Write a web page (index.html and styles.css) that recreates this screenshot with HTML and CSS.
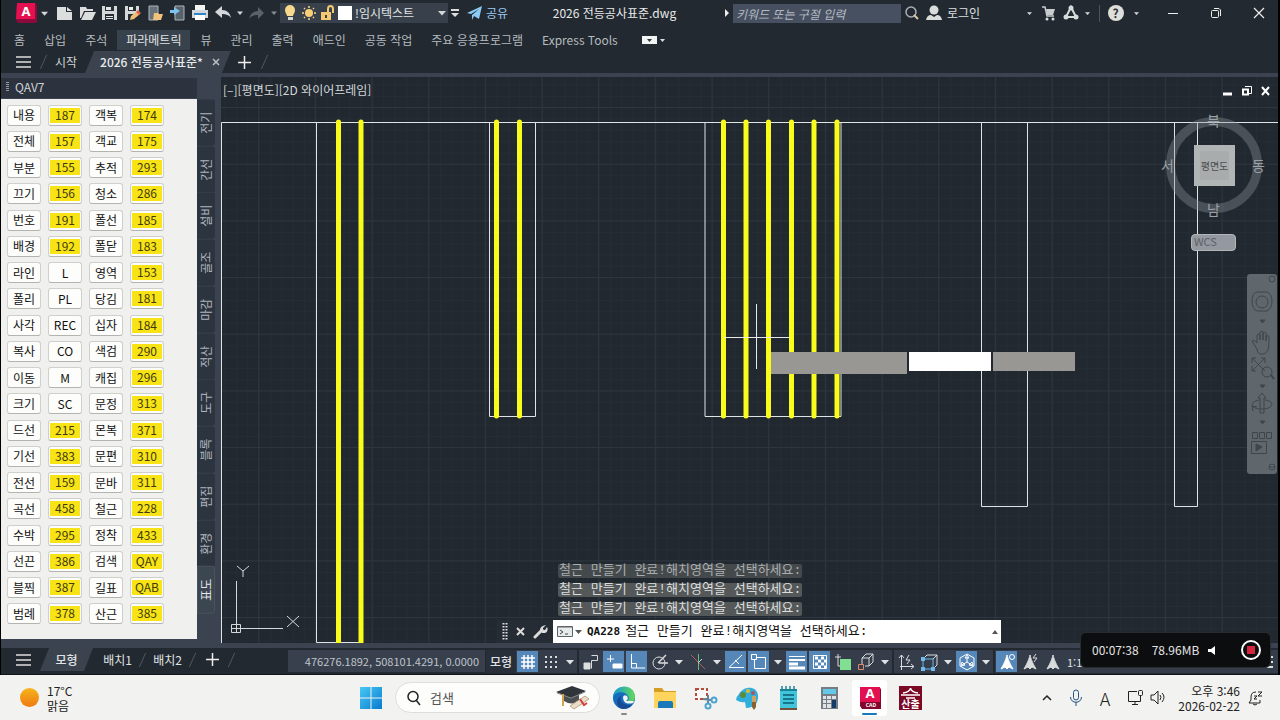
FILE: index.html
```html
<!DOCTYPE html>
<html lang="ko">
<head>
<meta charset="utf-8">
<title>2026 전등공사표준.dwg</title>
<link rel="stylesheet" href="styles.css">
</head>
<body>
<svg class="defs" aria-hidden="true">
  <symbol id="down" viewBox="0 0 8 8"><path d="M0 2h8L4 6.500z" fill="currentColor"/></symbol>
  <symbol id="person" viewBox="0 0 18 18"><path d="M9 2c1 4 2 7 6 14l-4-2-2 2-2-2-4 2C7 9 8 6 9 2z" fill="currentColor"/></symbol>
</svg>
<div class="desktop">
<div class="app">
  <header class="titlebar">
    <button class="logo" aria-label="메뉴"><svg width="23" height="22"><path d="M2 1h18l2 2v17l-2 1H3l-2-3z" fill="#8c0a3c"/><path d="M2 1h18v16H1z" fill="#e4104f"/><text x="11" y="14" text-anchor="middle" class="logo-a">A</text></svg></button>
    <button class="drop" aria-label="열기"><svg width="7" height="7"><use href="#down"/></svg></button>
    <div class="quick">
      <button aria-label="새로 만들기"><svg width="18" height="16" fill="#dcdedd"><path d="M1 2h9v5h6v8H1z"/><path d="M11 2l5 4h-5z"/></svg></button>
      <button aria-label="열기"><svg width="18" height="16" fill="#dcdedd"><path d="M1 2h6l1 2h6v2H5L2 13H1z"/><path d="M6 7h11l-4 8H2z"/></svg></button>
      <button aria-label="저장"><svg width="18" height="16"><path d="M1 1h15v14H1z" fill="#d5d8d9"/><path d="M4 1h9v5H4zM4 9h9v6H4z" fill="#262d35"/><path d="M5 2h5v3H5zM5 11h7v1H5zM5 13h7v1H5z" fill="#e4e6e7"/></svg></button>
      <button aria-label="다른 이름으로 저장"><svg width="18" height="17"><path d="M1 1h14v14H1z" fill="#d5d8d9"/><path d="M4 1h8v5H4zM4 9h11v6H4z" fill="#262d35"/><path d="M5 2h4v3H5z" fill="#eee"/><path d="M6 15l1-4 6-5 3 3-6 5z" fill="#f1bd72"/><path d="M12 7l2-2 3 3-2 2z" fill="#db624e"/></svg></button>
      <button aria-label="모바일에서 열기"><svg width="18" height="17"><path d="M3 1h9v14H3z" fill="#66717a" stroke="#aeb5ba"/><path d="M8 8h4l1 1h4l-2 6H7z" fill="#f1c27c"/></svg></button>
      <button aria-label="모바일에 저장"><svg width="18" height="17"><path d="M6 1h9v14H6z" fill="#56626c" stroke="#aeb5ba"/><path d="M1 5h4V2l6 4-6 4V8H1z" fill="#7fc1ed"/></svg></button>
      <button aria-label="인쇄"><svg width="18" height="16"><path d="M4 0h10v5H4z" fill="#f4f4f4"/><path d="M1 5h16v8H1z" fill="#d4d8dc"/><path d="M3 8h12v2H3z" fill="#3084c5"/><path d="M4 10h10v5H4z" fill="#fff"/></svg></button>
      <button aria-label="실행 취소"><svg width="18" height="14"><path d="M1 6l7-6v4c5 0 8 3 9 8-2-3-5-4-9-4v4z" fill="#d5d8da"/></svg></button>
    </div>
    <button class="drop" aria-label="취소 목록"><svg width="6" height="6"><use href="#down"/></svg></button>
    <button class="redo" aria-label="다시 실행"><svg width="16" height="13"><path d="M15 6L9 0v4C4 4 1 7 0 12c2-3 5-4 9-4v4z" fill="#59616a"/></svg></button>
    <button class="drop dim" aria-label="다시 실행 목록"><svg width="6" height="6"><use href="#down"/></svg></button>
    <div class="layer">
      <svg width="18" height="18"><path d="M5 12c0-2-2-3-2-6a5 5 0 0 1 10 0c0 3-2 4-2 6z" fill="#f8d98b"/><path d="M6 13h5v3H6z" fill="#d6d6d0"/></svg>
      <svg width="18" height="18"><circle cx="9" cy="9" r="4" fill="#f8cf77"/><path d="M9 2v2M9 14v2M2 9h2M14 9h2M4 4l1 1M13 13l1 1M14 4l-1 1M5 13l-1 1" stroke="#f8d68c" stroke-width="1.500"/></svg>
      <svg width="18" height="18"><path d="M3 8h10v8H3z" fill="#f5c96f"/><path d="M10 8V5c0-4 5-4 5 0v4" fill="none" stroke="#f5c96f" stroke-width="2"/><path d="M7 11h2v3H7z" fill="#3a3f42"/></svg>
      <i class="swatch"></i>
      <select aria-label="도면층"><option>!임시텍스트</option></select>
      <svg class="combo-arrow" width="8" height="8"><use href="#down"/></svg>
    </div>
    <button class="drop more" aria-label="사용자화"><svg width="8" height="9"><path d="M0 0h8v2H0zM0 4h8L4 8z" fill="#ddd"/></svg></button>
    <button class="share"><svg width="15" height="15"><path d="M0 7L15 0l-3 13-5-3-2 4V9l7-6-8 5z" fill="#8bcaf5"/></svg>공유</button>
    <h1>2026 전등공사표준.dwg</h1>
    <button class="tip" aria-label="검색 확장"><svg width="5" height="8"><path d="M1 0l4 4-4 4z" fill="#eee"/></svg></button>
    <input class="find" placeholder="키워드 또는 구절 입력" aria-label="키워드 검색">
    <button class="tool" aria-label="찾기"><svg width="16" height="16" fill="none" stroke="#a9b0b6"><circle cx="7" cy="7" r="5" stroke-width="1.500"/><path d="M10 10l4 4" stroke="#d9c7a8" stroke-width="2"/></svg></button>
    <button class="login"><svg width="16" height="16" fill="#d9dcdb"><circle cx="8" cy="5" r="4.500"/><path d="M0 15q1-5 5-5l3 2 3-2q4 0 5 5z"/></svg>로그인</button>
    <div class="account">
      <button class="drop" aria-label="계정 메뉴"><svg width="5" height="5"><use href="#down"/></svg></button>
      <button class="tool" aria-label="장바구니"><svg width="14" height="15"><path d="M0 1h3l2 9h7" fill="none" stroke="#c9cdd0" stroke-width="1.500"/><path d="M4 3h9l-2 6H5z" fill="#c9cdd0"/><circle cx="5" cy="13" r="1.500" fill="#ddd"/><circle cx="11" cy="13" r="1.500" fill="#ddd"/></svg></button>
      <button class="tool" aria-label="앱 스토어"><svg width="16" height="16"><path d="M8 2L3 12h10z" fill="none" stroke="#d8dbdb" stroke-width="2"/><g fill="#d8dbdb"><circle cx="8" cy="3" r="2.500"/><circle cx="3" cy="12" r="2.500"/><circle cx="13" cy="12" r="2.500"/></g></svg></button>
      <button class="drop" aria-label="앱 메뉴"><svg width="5" height="5"><use href="#down"/></svg></button>
      <button class="tool help" aria-label="도움말"><span>?</span></button>
      <button class="drop" aria-label="도움말 메뉴"><svg width="5" height="5"><use href="#down"/></svg></button>
    </div>
    <div class="window">
      <button aria-label="최소화"><svg width="12" height="12"><path d="M1 6.500h10" stroke="#eee"/></svg></button>
      <button aria-label="복원"><svg width="12" height="12" fill="none" stroke="#eee"><rect x="1.500" y="3.500" width="7" height="7" rx="1"/><path d="M4 1.500h5l1.500 1.500v6"/></svg></button>
      <button aria-label="닫기"><svg width="12" height="12"><path d="M1 1l10 10M11 1L1 11" stroke="#eee" stroke-width="1.200"/></svg></button>
    </div>
  </header>
  <nav class="ribbon">
    <button>홈</button><button>삽입</button><button>주석</button><button class="on">파라메트릭</button><button>뷰</button><button>관리</button><button>출력</button><button>애드인</button><button>공동 작업</button><button>주요 응용프로그램</button><button>Express Tools</button>
    <button class="panel" aria-label="패널 최소화"><svg width="24" height="8"><path d="M0 0h15v8H0z" fill="#f2f4f4"/><path d="M5 3h5L7.500 6z" fill="#333"/><path d="M18 3h5l-2.500 3z" fill="#ddd"/></svg></button>
  </nav>
  <nav class="files">
    <button class="burger" aria-label="파일 메뉴"><svg width="15" height="12"><path d="M0 1h15M0 6h15M0 11h15" stroke="#ddd" stroke-width="1.500"/></svg></button>
    <i class="slash"></i>
    <button class="start">시작</button>
    <div class="file"><button>2026 전등공사표준*</button><button aria-label="탭 닫기"><svg width="8" height="8"><path d="M1 1l6 6M7 1L1 7" stroke="#bbc0c5" stroke-width="1.500"/></svg></button></div>
    <button class="plus" aria-label="새 탭"><svg width="13" height="13"><path d="M0 6.500h13M6.500 0v13" stroke="#eee" stroke-width="1.500"/></svg></button>
    <i class="slash"></i>
  </nav>
  <main class="work">
    <aside class="palette">
      <h2><i class="grip"></i>QAV7</h2>
      <div class="keys">
        <button>내용</button><button class="y"><b>187</b></button><button>객복</button><button class="y"><b>174</b></button>
        <button>전체</button><button class="y"><b>157</b></button><button>객교</button><button class="y"><b>175</b></button>
        <button>부분</button><button class="y"><b>155</b></button><button>추적</button><button class="y"><b>293</b></button>
        <button>끄기</button><button class="y"><b>156</b></button><button>청소</button><button class="y"><b>286</b></button>
        <button>번호</button><button class="y"><b>191</b></button><button>폴선</button><button class="y"><b>185</b></button>
        <button>배경</button><button class="y"><b>192</b></button><button>폴닫</button><button class="y"><b>183</b></button>
        <button>라인</button><button>L</button><button>영역</button><button class="y"><b>153</b></button>
        <button>폴리</button><button>PL</button><button>당김</button><button class="y"><b>181</b></button>
        <button>사각</button><button>REC</button><button>십자</button><button class="y"><b>184</b></button>
        <button>복사</button><button>CO</button><button>색검</button><button class="y"><b>290</b></button>
        <button>이동</button><button>M</button><button>캐집</button><button class="y"><b>296</b></button>
        <button>크기</button><button>SC</button><button>문정</button><button class="y"><b>313</b></button>
        <button>드선</button><button class="y"><b>215</b></button><button>몬복</button><button class="y"><b>371</b></button>
        <button>기선</button><button class="y"><b>383</b></button><button>문편</button><button class="y"><b>310</b></button>
        <button>전선</button><button class="y"><b>159</b></button><button>문바</button><button class="y"><b>311</b></button>
        <button>곡선</button><button class="y"><b>458</b></button><button>철근</button><button class="y"><b>228</b></button>
        <button>수박</button><button class="y"><b>295</b></button><button>정착</button><button class="y"><b>433</b></button>
        <button>선끈</button><button class="y"><b>386</b></button><button>검색</button><button class="y"><b>QAY</b></button>
        <button>블찍</button><button class="y"><b>387</b></button><button>길표</button><button class="y"><b>QAB</b></button>
        <button>범례</button><button class="y"><b>378</b></button><button>산근</button><button class="y"><b>385</b></button>
      </div>
    </aside>
    <nav class="side">
      <button>전기</button><button>간선</button><button>설비</button><button>골조</button><button>마감</button><button>적산</button><button>도구</button><button>블록</button><button>편집</button><button>환경</button><button class="on">표도</button>
    </nav>
    <section class="canvas">
      <svg class="drawing" aria-hidden="true">
        <defs>
          <pattern id="minor" width="11.333" height="11.333" patternUnits="userSpaceOnUse" x="3.600" y="7.600"><path d="M0 .5h12M.5 0v12" stroke="#242c34" fill="none"/></pattern>
          <pattern id="major" width="56.667" height="56.667" patternUnits="userSpaceOnUse" x="37.200" y="30"><path d="M0 .5h57M.5 0v57" stroke="#2d353f" fill="none"/></pattern>
        </defs>
        <rect width="100%" height="100%" fill="url(#minor)"/>
        <rect width="100%" height="100%" fill="url(#major)"/>
        <g transform="translate(-221 -77)" fill="none">
          <g stroke="#dfe4e6">
            <path d="M221.500 643V122.500H1280"/>
            <path d="M316.500 122v520.500H362M489.500 122v294.500h46V122M705 122v294.500h136V122M981.500 122v384.500h46V122M1174.500 122v384.500h23V122"/>
          </g>
          <g stroke="#f8fb1c" stroke-width="5" stroke-linecap="round">
            <path d="M338.500 122v525M361 122v525M496.500 122v294M519.500 122v294M723.500 122v294M746 122v294M768.500 122v294M791.500 122v294M814 122v294M837 122v294"/>
          </g>
          <path d="M756.500 304v65M724 337.500h66" stroke="#e8e8e8"/>
          <g stroke="#d5d8da"><path d="M236.500 581v52M231 628.500h52M231.500 624.500h9v8h-9z"/><path d="M237 566l6 5 6-5M243 571v6M287 616l12 11M299 616l-12 11"/></g>
        </g>
      </svg>
      <div class="viewlabel"><button>[–]</button><button>[평면도]</button><button>[2D 와이어프레임]</button></div>
      <div class="docwin">
        <button aria-label="최소화"><svg width="10" height="10"><path d="M0 8h9" stroke="#fff" stroke-width="3"/></svg></button>
        <button aria-label="복원"><svg width="10" height="10" fill="none" stroke="#fff"><path d="M1 3.500h5v5H1z" stroke-width="2"/><path d="M3 .5h6.500v7H7"/></svg></button>
        <button aria-label="닫기"><svg width="10" height="10"><path d="M1 1l7 8M8 1L1 9" stroke="#fff" stroke-width="2"/></svg></button>
      </div>
      <div class="cube">
        <svg width="100" height="100"><circle cx="50" cy="50" r="43.500" fill="none" stroke="#8c9499" stroke-opacity=".38" stroke-width="9"/></svg>
        <button class="n">북</button><button class="w">서</button><button class="e">동</button><button class="s">남</button>
        <button class="top">평면도</button>
      </div>
      <button class="wcs">WCS</button>
      <div class="navbar">
        <svg width="30" height="198" fill="none" stroke="#3f464b">
          <circle cx="25" cy="5" r="3"/><circle cx="15" cy="28" r="6"/><path d="M10 18h10q5 2 5 9t-5 10H10q-5-2-5-10t5-9z"/><path d="M13 46h5l-2.500 3z" fill="#3f464b"/>
          <path d="M10 75l-5-8q2-2 5 2V61q2-2 3 0v5-8q2-2 3 0v8-7q2-2 3 0v8-5q3-1 3 1v6q0 9-5 11h-4q-3-1-3-5"/>
          <path d="M5 84l13 13M5 97l13-13M5 89v-5h4M14 84h4v5M5 92v5h4"/><circle cx="20" cy="98" r="5"/><path d="M24 101l3 4" stroke-width="2"/><path d="M13 111h5l-2.500 3z" fill="#3f464b"/>
          <path d="M13 139v-15h-2l4-5 4 5h-2v15zM12 126c-10 2-9 9 3 9s13-8 3-9M6 137l-1-5 5 1"/><path d="M13 147h5l-2.500 3z" fill="#3f464b"/>
          <path d="M5.500 158.500h5v6h-5zM12.500 158.500h5v6h-5zM19.500 158.500h5v6h-5zM4.500 167.500h15v12h-15z"/><path d="M9 170l6 3-6 4z" fill="#3f464b"/><circle cx="25" cy="193" r="3"/><path d="M22 193h6"/>
        </svg>
      </div>
      <div class="dynamic"><i></i><input aria-label="X 좌표"><i></i></div>
      <div class="command">
        <ol><li>철근 만들기 완료!해치영역을 선택하세요:</li><li>철근 만들기 완료!해치영역을 선택하세요:</li><li>철근 만들기 완료!해치영역을 선택하세요:</li></ol>
        <div class="prompt">
          <div class="handle">
            <svg width="6" height="17"><path d="M1.500 0v17M4.500 0v17" stroke="#ddd" stroke-width="2" stroke-dasharray="1.500 1.500"/></svg>
            <button aria-label="닫기"><svg width="9" height="9"><path d="M1 1l7 7M8 1L1 8" stroke="#ddd" stroke-width="2"/></svg></button>
            <button aria-label="설정"><svg width="15" height="15"><path d="M2 13l7-7" stroke="#ddd" stroke-width="3" stroke-linecap="round"/><path d="M13 1l-3 3v2h2l2-3q2 4-2 6H9L7 6q0-4 6-5z" fill="#ddd"/></svg></button>
          </div>
          <div class="entry">
            <svg width="25" height="13"><path d="M.5 1.500h15v10H.5z" fill="#e8ebeb" stroke="#5e656a"/><path d="M1 2h14" stroke="#5e656a"/><path d="M3 5l3 2-3 2M8 9h3" fill="none" stroke="#444"/><path d="M18 5h7l-3.500 4z" fill="#555"/></svg>
            <label for="cmd">QA228</label><input id="cmd" value="철근 만들기 완료!해치영역을 선택하세요:">
            <button aria-label="기록 펼치기"><svg width="6" height="4"><path d="M0 4h6L3 0z" fill="#555"/></svg></button>
          </div>
        </div>
      </div>
    </section>
  </main>
  <footer class="status">
    <div class="layouts">
      <button class="burger" aria-label="배치 메뉴"><svg width="15" height="12"><path d="M0 1h15M0 6h15M0 11h15" stroke="#ddd" stroke-width="1.500"/></svg></button>
      <button class="model">모형</button><button class="lay">배치1</button><i class="slash"></i><button class="lay">배치2</button><i class="slash"></i>
      <button class="plus" aria-label="새 배치"><svg width="13" height="13"><path d="M0 6.500h13M6.500 0v13" stroke="#eee" stroke-width="1.500"/></svg></button><i class="slash"></i>
    </div>
    <button class="coords">476276.1892, 508101.4291, 0.0000</button>
    <div class="group">
      <button class="space">모형</button>
      <button class="ic on" aria-label="그리드"><svg><path d="M2 5h14M2 9h14M2 13h14M5 2v14M9 2v14M13 2v14" stroke-width="1.500"/></svg></button>
      <button class="ic" aria-label="스냅"><svg><path d="M3 4h13M3 9h13M3 14h13" stroke-width="2" stroke-dasharray="2 3"/></svg></button>
      <button class="ar" aria-label="스냅 옵션"><svg><use href="#down"/></svg></button>
    </div>
    <div class="group">
      <button class="ic" aria-label="구속조건"><svg><path d="M2 10h6v6H2z" fill="#ddd"/><path d="M9.500 2.500h6v5h-6v8"/></svg></button>
      <button class="ic on" aria-label="동적 입력"><svg><path d="M2 6h7M5.500 2v7" /><path d="M8 11h9v4H8z" fill="#fff"/></svg></button>
      <button class="ic on" aria-label="직교"><svg><path d="M3.500 1v14H17M4 10.500h4.500V15"/></svg></button>
      <button class="ic" aria-label="극좌표"><svg><circle cx="8" cy="10" r="6"/><path d="M7 10l8-8M8 10h9" stroke-width="1.500"/></svg></button>
      <button class="ar" aria-label="극좌표 옵션"><svg><use href="#down"/></svg></button>
      <button class="ic" aria-label="등각투영"><svg><path d="M2 2l14 14" stroke="#ba5961"/><path d="M9.500 1v16" stroke="#5dbf7c"/><path d="M9 10l4-4"/></svg></button>
      <button class="ar" aria-label="등각투영 옵션"><svg><use href="#down"/></svg></button>
      <button class="ic on" aria-label="객체 스냅 추적"><svg><path d="M15 2L2 14.500h15M8 7l4 4"/></svg></button>
      <button class="ic on" aria-label="객체 스냅"><svg><path d="M4.500 4.500h11v11h-11z"/><path d="M1.500 1.500h5v5h-5z" fill="#5687b9"/></svg></button>
      <button class="ar" aria-label="객체 스냅 옵션"><svg><use href="#down"/></svg></button>
      <button class="ic on" aria-label="선가중치"><svg><path d="M1 3.500h16" /><path d="M1 7h16" stroke-width="2"/><path d="M1 11h9M1 15h16" stroke-width="3"/></svg></button>
      <button class="ic on" aria-label="투명도"><svg><path d="M2.500 2.500h13v13h-13z"/><path d="M4 5h11M4 11h11" stroke-width="3" stroke-dasharray="3 3"/><path d="M7 8h8M7 14h8" stroke-width="3" stroke-dasharray="3 3"/></svg></button>
      <button class="ic" aria-label="선택 순환"><svg><path d="M6 6h11v11H6z" fill="#82df91" stroke="none"/><path d="M1 4h6M4 1v6M4 7v6h2"/></svg></button>
      <button class="ic" aria-label="3D 객체 스냅"><svg><path d="M5 11V5h7v8H8M5 5l4-4h7l-4 4M16 1v8l-4 4"/><path d="M1.500 11.500h5v5h-5z" stroke="#dd8a72"/></svg></button>
      <button class="ar" aria-label="3D 옵션"><svg><use href="#down"/></svg></button>
    </div>
    <div class="group">
      <button class="ic" aria-label="동적 UCS"><svg><path d="M4.500 17V2M2 5l2.500-3L7 5M3 13.500h14M14 11l3 2.500-3 2.500M12 2L9 7h4l-3 4"/></svg></button>
      <button class="ic" aria-label="선택 필터"><svg><path d="M3 6h10v10H3z" stroke="#71b9e9"/><path d="M3 6l4-4h10l-4 4M17 2v10l-4 4"/><path d="M1 4h4v4H1zM1 14h4v4H1zM11 14h4v4h-4z" fill="#71b9e9" stroke="none"/></svg></button>
      <button class="ar" aria-label="필터 옵션"><svg><use href="#down"/></svg></button>
      <button class="ic on" aria-label="기즈모"><svg><path d="M9 1l7 4v8l-7 4-7-4V5zM9 9V4M9 9l-5 3M9 9l5 3"/><path d="M7 5l2-3 2 3zM3 13l1-4 3 3zM15 13l-1-4-3 3z"/></svg></button>
      <button class="ar" aria-label="기즈모 옵션"><svg><use href="#down"/></svg></button>
    </div>
    <div class="group grow">
      <button class="ic on" aria-label="주석 표시"><svg><use href="#person"/><circle cx="14" cy="4" r="2.500"/></svg></button>
      <button class="ic" aria-label="자동 축척"><svg><use href="#person"/><path d="M15 1l-3 4h4l-3 4"/></svg></button>
      <button class="ic" aria-label="주석 축척"><svg><use href="#person"/></svg></button>
      <button class="scale">1:1</button>
      <button class="ic custom" aria-label="사용자화"><svg><path d="M3 4h12M3 9h12M3 14h12" stroke-width="2"/></svg></button>
    </div>
  </footer>
</div>
<footer class="taskbar">
  <button class="weather"><i></i><span class="now"><span>17°C</span><span>맑음</span></span></button>
  <div class="dock">
    <button class="start-btn" aria-label="시작"><svg width="22" height="22"><defs><linearGradient id="win" x2="1" y2="1"><stop stop-color="#48c9f4"/><stop offset="1" stop-color="#087bcf"/></linearGradient></defs><path d="M0 0h10.500v10.500H0zM11.500 0H22v10.500H11.500zM0 11.500h10.500V22H0zM11.500 11.500H22V22H11.500z" fill="url(#win)"/></svg></button>
    <label class="search"><svg width="15" height="16" fill="none" stroke="#222" stroke-width="1.500"><circle cx="7" cy="6.500" r="5"/><path d="M10 10l4 5"/></svg><input placeholder="검색" aria-label="검색"><svg width="36" height="26"><path d="M8 8v8q8 5 15 0V8z" fill="#4b4f54"/><path d="M0 7l16-6 14 5-15 7z" fill="#30353b"/><path d="M1 8l14 5 14-6" fill="none" stroke="#888"/><path d="M7 9v12" stroke="#d5a449" stroke-width="2"/><path d="M14 21l15-10 4 3-15 10z" fill="#e9dfc8" stroke="#bda889"/><path d="M24 14l4 6 3-2" fill="none" stroke="#d34242" stroke-width="2"/></svg></label>
    <button class="task" aria-label="Edge"><svg width="24" height="24"><defs><linearGradient id="edge" x2="1"><stop stop-color="#1697d8"/><stop offset="1" stop-color="#62da55"/></linearGradient></defs><circle cx="12" cy="12" r="11" fill="#136cbe"/><path d="M1 11C2-3 23-3 23 11q0 6-8 4 3-2 1-5C12 4 3 6 1 11z" fill="url(#edge)"/><path d="M9 10q-2 8 7 9 4 0 5-2-4 6-10 6-6-1-6-7 0-4 4-6z" fill="#184b94"/><path d="M11 11q1-3 4-1 2 3-1 5h8l-1 2q-4 1-7 0-3-2-3-6z" fill="#f3f4f2"/></svg><i class="run"></i></button>
    <button class="task" aria-label="파일 탐색기"><svg width="24" height="24"><path d="M1 2h8l2 3h12v17H1z" fill="#d59d24"/><path d="M1 6h22v16H1z" fill="#ffd45d"/><path d="M5 22v-5q0-2 2-2h11q2 0 2 2v5z" fill="#1b79b9"/></svg></button>
    <button class="task" aria-label="캡처 도구"><svg width="24" height="24" fill="none"><path d="M2 3h11v10H2z" fill="#f9f9f9" stroke="#b64b3c" stroke-width="2" stroke-dasharray="3 2"/><path d="M9 13l8 1M14 9v8" stroke="#64849a" stroke-width="2"/><circle cx="14" cy="20" r="2.500" stroke="#4da3d1" stroke-width="2"/><circle cx="20" cy="14" r="2.500" stroke="#4da3d1" stroke-width="2"/></svg></button>
    <button class="task" aria-label="그림판"><svg width="24" height="24"><path d="M4 8C9-1 22 0 23 9q1 12-12 13l-1-6q-4 1-9-2 0-3 3-6z" fill="#31aeda"/><circle cx="8" cy="9" r="3" fill="#5d8a3b"/><circle cx="13" cy="5" r="2" fill="#e0bd35"/><circle cx="18" cy="7" r="2" fill="#ae5260"/><path d="M17 13h4v8l-2 3-2-3z" fill="#88622e"/><path d="M17 10h4v6h-4z" fill="#d0a261"/></svg></button>
    <button class="task" aria-label="메모장"><svg width="24" height="24"><path d="M4 3h17v19H4z" fill="#42c4db"/><path d="M4 3h17v2H4z" fill="#168298"/><path d="M6 4V0M10 4V0M14 4V0M18 4V0" stroke="#248198" stroke-width="1.500"/><path d="M7 9h11M7 13h11M7 17h11" stroke="#075c76" stroke-width="1.500"/><path d="M4 22h17v2H4z" fill="#72513b"/></svg></button>
    <button class="task" aria-label="계산기"><svg width="24" height="24"><path d="M4 1h17v22H4z" fill="#777d84"/><path d="M6 3h13v5H6z" fill="#63c9e9"/><path d="M6 10h3v3H6zM10 10h4v3h-4zM15 10h4v3h-4zM6 14h3v3H6zM10 14h4v3h-4zM6 18h3v4H6zM10 18h4v4h-4z" fill="#e0e4e6"/><path d="M15 14h4v8h-4z" fill="#133d69"/></svg></button>
    <button class="task active" aria-label="AutoCAD"><svg width="24" height="24"><path d="M2 1h19l2 2v20H4l-2-3z" fill="#82072e"/><path d="M2 1h20v15H2z" fill="#e31051"/><text x="12" y="12" text-anchor="middle" class="logo-a">A</text><text x="13" y="21" text-anchor="middle" class="logo-cad">CAD</text></svg><i class="run"></i></button>
    <button class="task sansul" aria-label="산출"><svg width="23" height="24"><path d="M4 7q7-1 7.500-5 .5 4 7.500 5M2 9h19M7 12h9" fill="none" stroke="#fff" stroke-width="1.500"/><text x="11.500" y="22" text-anchor="middle">산출</text></svg></button>
  </div>
  <div class="tray">
    <button aria-label="숨겨진 아이콘"><svg width="10" height="8"><path d="M1 6l4-4 4 4" fill="none" stroke="#222" stroke-width="1.500"/></svg></button>
    <button aria-label="마이크"><svg width="14" height="17" fill="none" stroke="#25517f"><rect x="4.500" y="1" width="5" height="10" rx="2.500"/><path d="M1.500 8c0 7 11 7 11 0M7 13v4"/></svg></button>
    <button class="ime">A</button>
    <button aria-label="네트워크"><svg width="17" height="17" fill="none" stroke="#222"><path d="M10 2.500H1.500v10h12V9M5 15.500h6M8 13v2"/><rect x="11.500" y="1.500" width="4" height="5" rx="1"/><path d="M13.500 7v4"/></svg></button>
    <button class="volume" aria-label="볼륨"><svg width="16" height="15" fill="none" stroke="#222"><path d="M1 5v5h3l4 4V1L4 5zM10 5q2 2 0 5M12 3q4 4 0 9" /></svg></button>
    <button class="clock">오후 3:46<br>2026-02-22</button>
    <button aria-label="알림"><svg width="15" height="16" fill="none" stroke="#222"><path d="M8 2Q3 2 3 7v3l-2 3h11v-3M5 14q2 2 4 0M10 2h4l-4 4h4M6 6h3L6 9h3"/></svg></button>
  </div>
</footer>
<div class="recorder"><span>00:07:38</span><span>78.96MB</span><button aria-label="음량"><svg width="7" height="9"><path d="M7 0v9L3 6H0V3h3z" fill="#fff"/></svg></button><button class="stop" aria-label="녹화 중지"><i></i></button></div>
</div>
</body>
</html>
```
FILE: styles.css
```css
* { box-sizing: border-box; }
body {
  margin: 0;
  background: #000;
  font: 12px/16px "Noto Sans CJK KR", sans-serif;
  color: #d5d8da;
}
button, input, select {
  font: inherit;
  color: inherit;
  background: none;
  border: 0;
  padding: 0;
  margin: 0;
  min-width: 0;
  white-space: nowrap;
}
button { display: inline-flex; align-items: center; justify-content: center; flex: none; }
svg { display: block; flex: none; }
i { flex: none; font-style: normal; }
h1, h2 { margin: 0; font: inherit; }
.defs { position: absolute; width: 0; height: 0; }
.desktop { position: relative; display: flex; flex-direction: column; min-height: 100vh; }
.app {
  flex: 1;
  display: flex;
  flex-direction: column;
  background: #222930;
  border-left: 1px solid #000;
  border-right: 2px solid #000;
}

/* title bar */
.titlebar { display: flex; align-items: center; height: 26px; padding-left: 14px; }
.logo-a { font: bold 13px "Noto Sans", sans-serif; fill: #fff; }
.logo-cad { font: bold 5px "Noto Sans", sans-serif; fill: #fff; }
.drop { width: 12px; color: #d5d8da; }
.dim { color: #858b91; }
.quick { display: flex; width: 180px; margin-left: 4px; }
.quick button { flex: 1; }
.redo { width: 22px; }
.layer { display: flex; align-items: center; width: 168px; height: 20px; background: #38414b; padding: 0 2px; }
.layer select { flex: 1; appearance: none; color: #e2e5e6; padding-left: 3px; height: 20px; }
.swatch { width: 14px; height: 14px; background: #fff; margin-left: 2px; }
.combo-arrow { pointer-events: none; }
.more { width: 14px; }
.share { gap: 4px; margin-left: 5px; color: #9accf0; }
.titlebar h1 { flex: 1; text-align: center; color: #e8eaeb; }
.tip { width: 12px; }
.find { width: 168px; height: 19px; background: #475060; padding: 0 3px; font-style: italic; }
.find::placeholder { color: #b5bbc5; opacity: 1; }
.tool { width: 22px; }
.login { gap: 5px; margin-left: 3px; color: #dde0e1; }
.account { display: flex; align-items: center; margin-left: 40px; }
.account .drop { width: 10px; }
.account .drop:first-child { width: 18px; }
.help { border-left: 1px solid #4c5359; width: 32px; margin-left: 7px; height: 17px; }
.help span { width: 16px; height: 16px; line-height: 15px; border-radius: 8px; background: #dedfdb; color: #333; font-weight: bold; }
.window { display: flex; gap: 5px; margin-left: 13px; }
.window button { width: 38px; height: 26px; }

/* ribbon and drawing tabs */
.ribbon { display: flex; align-items: center; gap: 1px; height: 25px; padding: 2px 0 0 4px; color: #b4babf; }
.ribbon button { padding: 0 9px; height: 20px; }
.ribbon .on { background: #38424c; color: #e0e3e4; }
.ribbon .panel { margin-left: 5px; }
.files { display: flex; align-items: center; height: 22px; padding-left: 14px; }
.burger { width: 16px; }
.slash { width: 1px; height: 14px; background: #505860; transform: skewX(-24deg); }
.files .slash { margin-left: 12px; }
.start { margin: 0 8px 0 11px; color: #cfd3d6; }
.file {
  display: flex;
  align-items: center;
  gap: 9px;
  height: 22px;
  padding: 0 11px 0 15px;
  background: #3a434e;
  clip-path: polygon(9px 0, 100% 0, calc(100% - 9px) 100%, 0 100%);
  font-weight: 500;
  color: #e8ebed;
}
.plus { width: 14px; }
.files .plus { margin-left: 7px; }

/* workspace */
.work { flex: 1; display: flex; background: #3a434f; padding: 4px 0 5px; }
.palette { width: 196px; display: flex; flex-direction: column; padding: 1px 0 4px; }
.palette h2 { display: flex; align-items: center; gap: 6px; height: 20px; padding: 0 0 3px 5px; background: #2c333f; color: #ced2d6; }
.grip { width: 3px; height: 9px; background: repeating-linear-gradient(#929aa4 0 1px, transparent 1px 2px); }
.keys {
  flex: 1;
  display: grid;
  grid-template-columns: repeat(4, 34px);
  grid-auto-rows: 1fr;
  align-items: center;
  column-gap: 7px;
  padding: 3px 0 12px 6px;
  margin-top: 1px;
  background: #f0f0ee;
  color: #111;
}
.keys button { height: 21px; background: #fdfdfb; border: 1px solid #cfcfcc; border-bottom-color: #b3b3af; border-radius: 3px; }
.keys b { width: 30px; height: 15px; line-height: 14px; font-weight: normal; background: #f8e416; color: #3f3b0c; }
.side { width: 18px; display: flex; flex-direction: column; padding: 22px 0 29px; }
.side button {
  flex: 1;
  width: 18px;
  writing-mode: vertical-rl;
  text-orientation: sideways;
  transform: rotate(180deg);
  background: #2c3440;
  border-bottom: 1px solid #363f4b;
  border-radius: 3px 0 0 3px;
  color: #b0b6bd;
}
.side .on { background: #3c4651; color: #e4e7e9; border: 1px solid #4a535d; }
.canvas { position: relative; flex: 1; margin-left: 6px; background: #212830; overflow: hidden; }
.drawing { position: absolute; width: 100%; height: 100%; }
.viewlabel { position: absolute; left: 2px; top: 5px; color: #d3d7d9; }
.docwin { position: absolute; right: 7px; top: 9px; display: flex; gap: 9px; }
.cube { position: absolute; right: 14px; top: 38px; width: 100px; height: 100px; font-size: 14px; color: #9ba1a5; }
.cube button { position: absolute; }
.cube .n { left: 43px; top: -3px; }
.cube .w { left: -3px; top: 42px; }
.cube .e { right: -1px; top: 42px; }
.cube .s { left: 43px; top: 86px; }
.cube .top { left: 30px; top: 30px; width: 41px; height: 41px; background: #a9acac; border: 6px solid #b2b5b5; color: #4b4f50; font-size: 10px; }
.wcs { position: absolute; right: 42px; top: 157px; width: 45px; height: 17px; background: #94989f; border: 1px solid #b2b5ba; border-radius: 4px; color: #5c6268; font-size: 11px; line-height: 13px; justify-content: flex-start; padding: 0 0 3px 2px; }
.navbar { position: absolute; right: 1px; top: 197px; background: #60676c; border-radius: 3px; height: 200px; }
.dynamic { position: absolute; left: 550px; top: 275px; display: flex; gap: 2px; }
.dynamic i { width: 82px; height: 19px; background: #999794; }
.dynamic i:first-child { width: 136px; height: 22px; }
.dynamic input { width: 82px; height: 19px; background: #fff; color: #111; }
.command { position: absolute; left: 276px; right: 277px; bottom: 0; font: 13px/14px "Liberation Mono", "Noto Sans CJK KR", monospace; }
.command ol { list-style: none; margin: 0 0 4px 61px; padding: 0; display: flex; flex-direction: column; align-items: flex-start; gap: 5px; }
.command li { background: #545859; border-radius: 2px; padding: 0 1px; height: 14px; color: #dbdddd; white-space: nowrap; }
.command li:first-child { background: #44494c; color: #a9adaf; }
.prompt { display: flex; height: 23px; }
.handle { width: 56px; display: flex; align-items: center; justify-content: space-between; background: #262c34; padding: 0 5px; }
.entry { flex: 1; display: flex; align-items: center; gap: 5px; background: #fff; color: #111; padding: 0 3px 0 4px; }
.entry label { font: bold 11px/14px "DejaVu Sans Mono", monospace; }
.entry input { flex: 1; }

/* layout tabs and status bar */
.status { display: flex; height: 27px; border-bottom: 1px solid #11161b; background: #222930; color: #e0e3e5; }
.layouts { width: 287px; display: flex; align-items: center; padding: 0 0 3px 14px; }
.model { width: 53px; height: 23px; margin-left: 9px; background: #3a434e; clip-path: polygon(9px 0, 100% 0, calc(100% - 9px) 100%, 0 100%); font-weight: 500; }
.lay { width: 49px; }
.layouts .plus { margin: 0 12px; }
.coords { width: 197px; background: #383f4d; color: #bfc4cb; margin: 2px 0; justify-content: flex-end; padding-right: 6px; font-size: 11px; }
.group { display: flex; align-items: center; height: 23px; margin: 2px 0 0 1px; background: #343d49; }
.group + .group { margin-left: 2px; }
.grow { flex: 1; }
.space { width: 30px; height: 23px; background: #282f39; font-weight: 500; }
.ic { width: 23px; height: 23px; border: 1px solid transparent; background-clip: padding-box; color: #d9dcdd; }
.ic svg { width: 18px; height: 18px; fill: none; stroke: #d9dcdd; }
.ic.on { background-color: #5687b9; color: #fff; }
.ic.on svg { stroke: #fff; }
.ar { width: 15px; }
.ar svg { width: 8px; height: 8px; }
.scale { margin-left: 3px; font-size: 11px; }
.custom { margin-left: auto; }

/* taskbar */
.taskbar { display: flex; align-items: center; height: 45px; background: #f2f2f0; color: #222; padding: 0 17px 0 20px; }
.weather { gap: 8px; text-align: left; width: 340px; justify-content: flex-start; }
.weather i { width: 19px; height: 19px; border-radius: 10px; background: linear-gradient(#f6b51c, #ef7911); }
.now { display: flex; flex-direction: column; line-height: 15px; }
.dock { display: flex; align-items: center; }
.search { display: flex; align-items: center; width: 205px; height: 31px; margin: 0 3px 0 13px; padding: 0 7px 0 10px; border: 1px solid #dededc; border-radius: 16px; background: #fdfdfc; gap: 9px; }
.search input { flex: 1; font-size: 13px; }
.search input::placeholder { color: #555; opacity: 1; }
.task { position: relative; width: 35px; height: 36px; margin: 0 3px; border-radius: 3px; }
.active { background: #fff; }
.run { position: absolute; left: 15px; bottom: 1px; width: 6px; height: 2px; border-radius: 1px; background: #888; }
.active .run { left: 10px; width: 15px; background: #1678bf; }
.sansul { width: 23px; height: 24px; margin: 0 9px; background: #7b0824; border-radius: 0; }
.sansul text { font-size: 10px; font-weight: 700; fill: #fff; }
.tray { display: flex; align-items: center; margin-left: auto; gap: 17px; }
.ime { font-size: 18px; font-weight: 300; }
.volume { margin-left: -11px; }
.clock { text-align: right; line-height: 15px; margin: 0 -9px 0 -5px; }
.recorder {
  position: absolute;
  right: 9px;
  bottom: 52px;
  display: flex;
  align-items: center;
  gap: 16px;
  width: 191px;
  height: 36px;
  padding: 0 9px 0 11px;
  background: #0c0d0e;
  border: 1px solid #292c2f;
  border-radius: 6px;
  color: #e4e4e4;
}
.recorder span + span { margin-left: -3px; }
.recorder button:nth-of-type(1) { margin-left: -7px; }
.stop { width: 20px; height: 20px; margin-left: auto; border: 2px solid #fff; border-radius: 10px; }
.stop i { width: 8px; height: 8px; background: #d6253e; }
```
